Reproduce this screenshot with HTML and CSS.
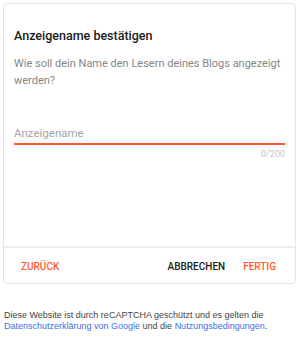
FILE: index.html
```html
<!DOCTYPE html>
<html lang="de">
<head>
    <meta charset="UTF-8">
    <meta name="viewport" content="width=device-width, initial-scale=1.0">
    <title>Anzeigename bestätigen</title>
    <link rel="stylesheet" href="styles.css">
</head>
<body>
    <div class="dialog">
        <div class="dialog-body">
            <h1 class="dialog-title">Anzeigename bestätigen</h1>
            <p class="dialog-text">Wie soll dein Name den Lesern deines Blogs angezeigt werden?</p>
            <div class="field">
                <div class="field-input">Anzeigename</div>
                <div class="field-count">0/200</div>
            </div>
        </div>
        <div class="dialog-actions">
            <button class="btn btn-accent">Zurück</button>
            <span class="spacer"></span>
            <button class="btn">Abbrechen</button>
            <button class="btn btn-accent">Fertig</button>
        </div>
    </div>
    <p class="notice">Diese Website ist durch reCAPTCHA geschützt und es gelten die <a href="#">Datenschutzerklärung von Google</a> und die <a href="#">Nutzungsbedingungen</a>.</p>
</body>
</html>
```

FILE: styles.css
```css
body {
    margin: 0;
    padding: 3px 4px 0 3px;
    background-color: #fff;
    font-family: Roboto, "Noto Sans", sans-serif;
}
.dialog {
    height: 279px;
    border: 1px solid #e3e6e6;
    border-radius: 4px;
    display: flex;
    flex-direction: column;
}
.dialog-body {
    flex: 1;
    padding: 24px 10px 0 10px;
}
.dialog-title {
    margin: 0;
    font-size: 12.5px;
    font-weight: 500;
    line-height: 16px;
    color: #212121;
}
.dialog-text {
    margin: 11px 0 0;
    font-size: 11px;
    line-height: 17px;
    color: #858585;
}
.field {
    margin-top: 36px;
}
.field-input {
    font-size: 11.5px;
    line-height: 16px;
    color: #a6a6a6;
    padding-bottom: 2px;
    border-bottom: 2px solid #ff5a2c;
}
.field-count {
    margin-top: 3px;
    text-align: right;
    font-size: 9px;
    line-height: 12px;
    color: #c4c4c4;
}
.dialog-actions {
    height: 33px;
    border-top: 2px solid #eceeee;
    display: flex;
    align-items: center;
    padding: 2px 10px 0 8px;
}
.spacer {
    flex: 1;
}
.btn {
    border: none;
    background: none;
    padding: 0 9px;
    font-family: inherit;
    font-size: 10px;
    font-weight: 500;
    text-transform: uppercase;
    color: #212121;
}
.btn-accent {
    color: #ff5a2c;
}
.notice {
    margin: 26px 0 0 1px;
    font-family: "Liberation Sans", Arial, sans-serif;
    font-size: 9px;
    line-height: 11px;
    color: #444;
}
.notice a {
    color: #3f6ee8;
    text-decoration: none;
}
```
